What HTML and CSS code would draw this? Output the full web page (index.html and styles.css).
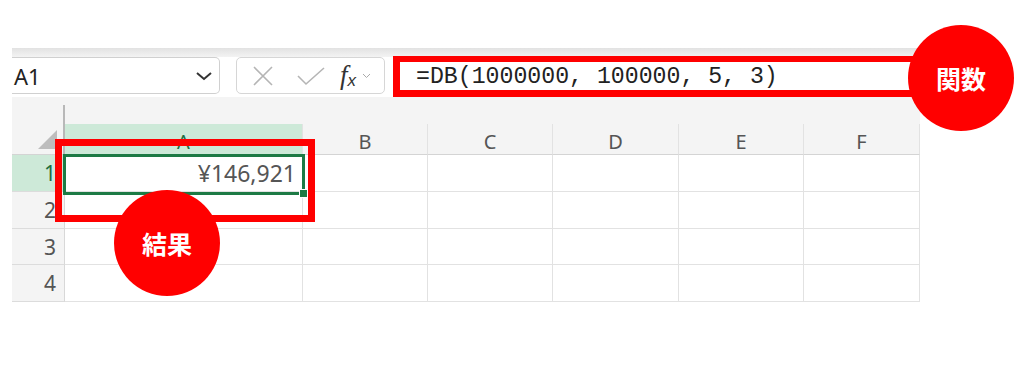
FILE: index.html
```html
<!DOCTYPE html>
<html>
<head>
<meta name="viewport" content="width=device-width, initial-scale=1">
<link rel="stylesheet" href="styles.css">
</head>
<body>

<div class="sheet">
  <div class="topband"></div>

  <!-- name box, formula buttons, formula bar -->
  <div class="toolbar">
    <div class="namebox">
      <span>A1</span>
      <svg class="chev" width="18" height="10" viewBox="0 0 18 10"><polyline points="2,2 9,8 16,2" fill="none" stroke="#333" stroke-width="2"/></svg>
    </div>
    <div class="fxbox">
      <svg width="22" height="22" viewBox="0 0 22 22"><path d="M2 2 L20 20 M20 2 L2 20" stroke="#b5b5b5" stroke-width="1.6" fill="none"/></svg>
      <svg width="30" height="22" viewBox="0 0 30 22"><polyline points="2,11 10,19 28,3" stroke="#b5b5b5" stroke-width="1.6" fill="none"/></svg>
      <span class="fx"><i>f</i><sub>x</sub></span>
      <svg width="9" height="6" viewBox="0 0 9 6"><polyline points="1,1 4.5,4.5 8,1" stroke="#aaa" stroke-width="1" fill="none"/></svg>
    </div>
    <div class="formula">=DB(1000000, 100000, 5, 3)</div>
  </div>

  <!-- grid -->
  <div class="grid">
    <div class="gap corner-top"></div>
    <div class="gap"></div><div class="gap"></div><div class="gap"></div><div class="gap"></div><div class="gap"></div><div class="gap"></div>

    <div class="corner"><span class="tri"></span></div>
    <div class="colhead sel">A</div>
    <div class="colhead">B</div>
    <div class="colhead">C</div>
    <div class="colhead">D</div>
    <div class="colhead">E</div>
    <div class="colhead">F</div>

    <div class="rowhead sel">1</div>
    <div class="cell num">¥146,921</div>
    <div class="cell"></div><div class="cell"></div><div class="cell"></div><div class="cell"></div><div class="cell"></div>

    <div class="rowhead">2</div>
    <div class="cell"></div><div class="cell"></div><div class="cell"></div><div class="cell"></div><div class="cell"></div><div class="cell"></div>

    <div class="rowhead">3</div>
    <div class="cell"></div><div class="cell"></div><div class="cell"></div><div class="cell"></div><div class="cell"></div><div class="cell"></div>

    <div class="rowhead">4</div>
    <div class="cell"></div><div class="cell"></div><div class="cell"></div><div class="cell"></div><div class="cell"></div><div class="cell"></div>
  </div>
</div>

<!-- overlays -->
<div class="selection"><span class="handle"></span></div>
<div class="redbox formula-mark"></div>
<div class="redbox result-mark"></div>
<div class="badge badge-func">関数</div>
<div class="badge badge-result">結果</div>

</body>
</html>
```

FILE: styles.css
```css
body {
  margin: 0;
  background: #fff;
  font-family: "Noto Sans", "Noto Sans CJK JP", sans-serif;
  position: relative;
  width: 1024px;
  height: 378px;
  overflow: hidden;
}

.sheet {
  margin: 48px 0 0 12px;
  width: 908px;
}

.topband {
  height: 9px;
  background: linear-gradient(#e2e2e2, #f3f3f3);
}

.toolbar {
  height: 40px;
  display: flex;
  align-items: flex-start;
}

.namebox {
  width: 208px;
  height: 37px;
  border: 1px solid #d0d0d0;
  border-left: none;
  border-radius: 0 5px 5px 0;
  display: flex;
  align-items: center;
  justify-content: space-between;
  padding: 0 4px 0 2px;
  box-sizing: border-box;
  font-size: 22px;
  color: #222;
}

.namebox .chev {
  margin-right: 2px;
}

.fxbox {
  margin-left: 16px;
  width: 149px;
  height: 37px;
  box-sizing: border-box;
  border: 1px solid #d6d6d6;
  border-radius: 5px;
  display: flex;
  align-items: center;
  padding-left: 15px;
}

.fxbox svg:nth-child(2) {
  margin-left: 22px;
}

.fx {
  margin-left: 14px;
  font-family: "Liberation Serif", serif;
  font-size: 27px;
  color: #333;
  line-height: 1;
}

.fx sub {
  font-family: "Liberation Sans", sans-serif;
  font-style: italic;
  font-size: 17px;
  vertical-align: -2px;
}

.fxbox svg:last-child {
  margin-left: 6px;
}

.formula {
  margin-left: 8px;
  flex: 1;
  height: 39px;
  display: flex;
  align-items: center;
  padding-left: 23px;
  font-family: "Liberation Mono", monospace;
  font-size: 23.2px;
  color: #222;
}

/* the spreadsheet */
.grid {
  display: grid;
  grid-template-columns: 53px 238px 125px 125px 126px 125px 116px;
  grid-template-rows: 27px 31px 37px 37px 36px 37px;
  background: #f4f4f4;
}

.gap {
  background: #f4f4f4;
}

.corner-top {
  border-right: 2px solid #b8b8b8;
  margin-top: 8px;
}

.corner {
  border-right: 2px solid #b8b8b8;
  border-bottom: 1px solid #d4d4d4;
  position: relative;
}

.tri {
  position: absolute;
  right: 6px;
  bottom: 5px;
  width: 0;
  height: 0;
  border-left: 19px solid transparent;
  border-bottom: 19px solid #bdbdbd;
}

.colhead {
  display: flex;
  align-items: center;
  justify-content: center;
  font-size: 20px;
  color: #555;
  border-right: 1px solid #e2e2e2;
  border-bottom: 1px solid #d4d4d4;
  padding-top: 4px;
  box-sizing: border-box;
}

.colhead:last-child {
  border-right: none;
}

.rowhead {
  display: flex;
  align-items: center;
  justify-content: flex-end;
  padding-right: 8px;
  font-size: 21px;
  color: #555;
  border-right: 1px solid #d8d8d8;
  border-bottom: 1px solid #dcdcdc;
}

.colhead.sel,
.rowhead.sel {
  background: #cde9d8;
  color: #1d6f42;
}

.cell {
  background: #fff;
  border-right: 1px solid #e2e2e2;
  border-bottom: 1px solid #e2e2e2;
}

.num {
  display: flex;
  align-items: center;
  justify-content: flex-end;
  padding-right: 6px;
  font-size: 23px;
  color: #555;
}

/* overlays */
.selection {
  position: absolute;
  left: 63px;
  top: 154px;
  width: 242px;
  height: 41px;
  box-sizing: border-box;
  border: 3px solid #1d7a45;
}

.handle {
  position: absolute;
  right: -6px;
  bottom: -6px;
  width: 7px;
  height: 7px;
  background: #1d7a45;
  border: 1px solid #fff;
}

.redbox {
  position: absolute;
  box-sizing: border-box;
  border: 7px solid #f00;
}

.formula-mark {
  left: 393px;
  top: 56px;
  width: 540px;
  height: 41px;
  border-width: 6px 7px 7px 7px;
}

.result-mark {
  left: 55px;
  top: 139px;
  width: 260px;
  height: 83px;
}

.badge {
  position: absolute;
  width: 106px;
  height: 106px;
  border-radius: 50%;
  background: #f00;
  color: #fff;
  font-family: "Noto Sans CJK JP", sans-serif;
  font-weight: bold;
  font-size: 25px;
  display: flex;
  align-items: center;
  justify-content: center;
}

.badge-func {
  left: 908px;
  top: 25px;
}

.badge-result {
  left: 114px;
  top: 190px;
}
```
